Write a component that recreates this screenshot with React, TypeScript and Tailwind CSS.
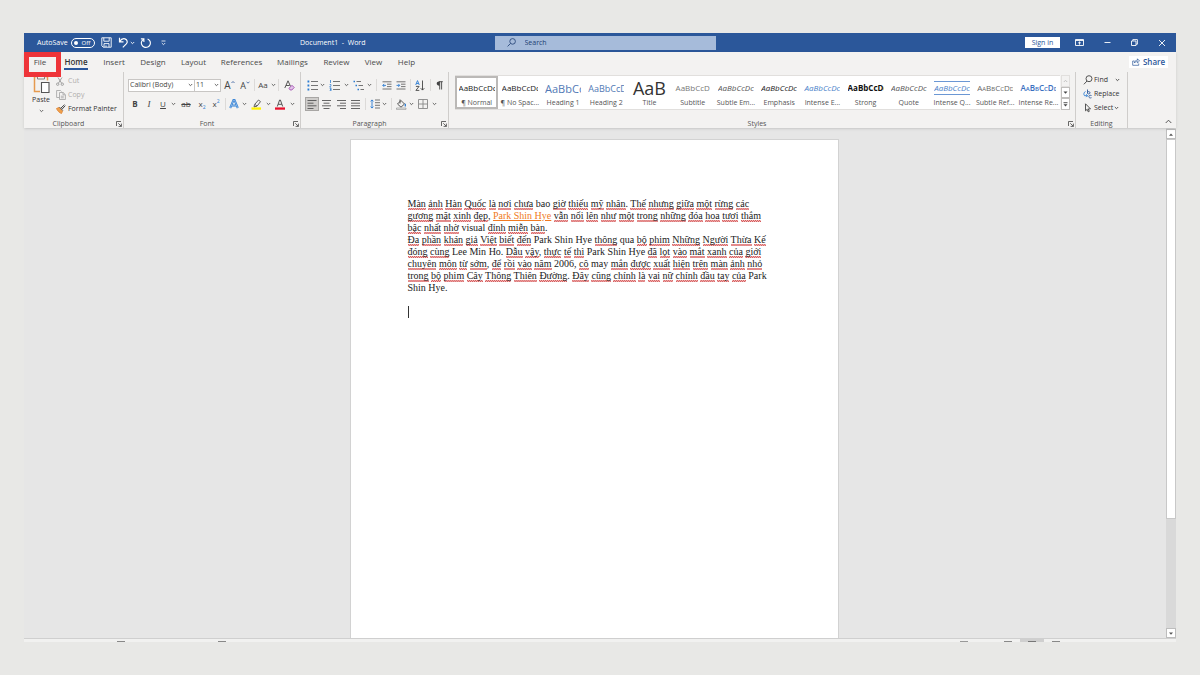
import type { ReactNode } from 'react';

const BLUE = '#2b579a';

function Icon({ w = 12, h = 12, children }: { w?: number; h?: number; children: ReactNode }) {
  return (
    <svg width={w} height={h} viewBox={`0 0 ${w} ${h}`} fill="none" stroke="#444" strokeWidth="0.9" aria-hidden="true" className="block shrink-0">
      {children}
    </svg>
  );
}

function Caret({ className = 'w-2' }: { className?: string }) {
  return (
    <button aria-label="More options" className={`flex h-3 shrink-0 items-center justify-center ${className}`}>
      <Icon w={5} h={4}><path d="M0.8 1l1.7 1.7L4.2 1" stroke="#555" /></Icon>
    </button>
  );
}

function Tool({ label, className = 'w-3.5', children }: { label: string; className?: string; children: ReactNode }) {
  return (
    <button aria-label={label} className={`flex h-3.5 shrink-0 items-center justify-center leading-none ${className}`}>
      {children}
    </button>
  );
}

function Rule({ className = 'w-1' }: { className?: string }) {
  return (
    <span className={`flex h-3 shrink-0 justify-center ${className}`}>
      <span className="w-px bg-[#dcdad8]" />
    </span>
  );
}

function Launcher({ label }: { label: string }) {
  return (
    <button aria-label={label} className="absolute right-px bottom-px">
      <Icon w={6} h={6}><path d="M0.5 5V0.5H5M2.3 2.3l3 3M5.4 2.6v2.8H2.6" strokeWidth="0.8" /></Icon>
    </button>
  );
}

function Group({ name, launcher = true, className, children }: { name: string; launcher?: boolean; className: string; children: ReactNode }) {
  return (
    <section aria-label={name} className={`relative flex flex-col border-r border-[#cfcdcb] ${className}`}>
      <div className="min-h-0 flex-1">{children}</div>
      <div className={`h-2 text-center leading-[8px] text-[#555] ${launcher ? 'pr-[10px]' : ''}`}>{name}</div>
      {launcher && <Launcher label={`${name} settings`} />}
    </section>
  );
}

function TitleBar() {
  return (
    <header className="flex h-[19px] items-center bg-[#2b579a] text-white">
      <div className="flex flex-1 items-center pl-[13px]">
        <label className="flex items-center gap-[3px] font-medium">
          AutoSave
          <span className="relative flex h-[10px] w-6 items-center rounded-full border border-white pl-0.5">
            <input type="checkbox" className="absolute inset-0 appearance-none" />
            <span className="size-1 rounded-full bg-white" />
            <span className="ml-1 text-[6px] leading-none">Off</span>
          </span>
        </label>
        <button aria-label="Save" className="ml-[6px]">
          <Icon w={11} h={11}><path d="M0.8 0.8h9.4v9.4H2.2L0.8 8.8zM2.8 0.8v3.4h5.4V0.8M3 10.2V6.600h5v3.600M5 10V8.400" stroke="#fff" /></Icon>
        </button>
        <button aria-label="Undo" className="ml-[6px]">
          <Icon w={11} h={11}><path d="M1.5 0.8v4h4M1.6 4.7C3 2.4 5 1.3 7 1.9c2.4.7 2.9 3.3 1.3 5L4.8 10.4" stroke="#fff" strokeWidth="1.2" /></Icon>
        </button>
        <span className="ml-px"><Icon w={5} h={4}><path d="M0.8 1l1.7 1.7L4.2 1" stroke="#fff" /></Icon></span>
        <button aria-label="Redo" className="ml-[5px]">
          <Icon w={12} h={12}><path d="M4 2.2C1.7 3.2.9 5.6 1.8 7.8c1 2.3 3.7 3.2 6 2.2s3.2-3.7 2.1-6C9.4 3 8.6 2.3 7.6 1.9M3.900 5V1.900H0.900" stroke="#fff" strokeWidth="1.1" /></Icon>
        </button>
        <button aria-label="Customize toolbar" className="ml-[9px]">
          <Icon w={5} h={6}><path d="M0.500 1h4M0.800 3l1.700 1.700L4.200 3" stroke="#fff" strokeWidth="0.800" /></Icon>
        </button>
        <h1 className="mr-[129px] ml-auto font-medium">Document1&nbsp; - &nbsp;Word</h1>
      </div>
      <label className="flex h-[14px] w-[221px] items-center bg-[#a6bbda] pl-3 text-[#1e3f73]">
        <Icon w={9} h={9}><circle cx="5.600" cy="3.400" r="2.800" stroke="#2b4a7c" /><path d="M3.500 5.500L0.600 8.400" stroke="#2b4a7c" /></Icon>
        <input aria-label="Search" placeholder="Search" className="ml-[9px] w-full bg-transparent font-medium outline-none placeholder:text-[#1e3f73]" />
      </label>
      <div className="flex flex-1 items-center justify-end pl-[3px]">
        <button className="h-[11px] w-[35px] bg-white leading-[11px] font-medium text-[#2b579a]">Sign in</button>
        <button aria-label="Ribbon display options" className="ml-[15px]">
          <Icon w={9} h={7}><path d="M0.500 0.500h8v6h-8zM0.500 1.500h8M4.500 5.700V3M3.200 4.100l1.300-1.200 1.300 1.200" stroke="#fff" /></Icon>
        </button>
        <button aria-label="Minimize" className="ml-[20px]"><Icon w={7} h={7}><path d="M0.500 3.500h6" stroke="#fff" /></Icon></button>
        <button aria-label="Restore" className="ml-[20px]"><Icon w={7} h={7}><path d="M0.500 2h4.500v4.500H0.500zM1.800 2V0.600h4.600v4.600H5" stroke="#fff" /></Icon></button>
        <button aria-label="Close" className="mr-[10px] ml-[20px]"><Icon w={8} h={8}><path d="M1 1l6 6M7 1L1 7" stroke="#fff" /></Icon></button>
      </div>
    </header>
  );
}

const tabs = [
  { name: 'File', cls: 'w-8' },
  { name: 'Home', cls: 'w-10' },
  { name: 'Insert', cls: 'w-9' },
  { name: 'Design', cls: 'w-[42px]' },
  { name: 'Layout', cls: 'w-[39px]' },
  { name: 'References', cls: 'w-[57px]' },
  { name: 'Mailings', cls: 'w-[45px]' },
  { name: 'Review', cls: 'w-[43px]' },
  { name: 'View', cls: 'w-[31px]' },
  { name: 'Help', cls: 'w-[35px]' },
];

function Tabs() {
  return (
    <nav className="relative flex h-5 items-center text-[8px] text-[#4a4a4a]">
      {tabs.map((t) => (
        <button key={t.name} className={`flex h-4 shrink-0 justify-center ${t.cls}`}>
          <span className={t.name === 'Home' ? 'h-4 border-b-2 border-[#2b579a] leading-[15px] font-semibold text-[#333]' : 'leading-[15px]'}>{t.name}</span>
        </button>
      ))}
      <span className="pointer-events-none absolute top-0 left-0 z-10 h-[25px] w-[37px] border-[5px] border-[#ee3439]" />
      <button className="mr-2 ml-auto flex h-3 w-[39px] items-center justify-center gap-[3px] bg-white font-semibold text-[#2b579a]">
        <Icon w={8} h={8}><path d="M2.500 3H0.700v4.300h6V5.500M2.300 5c.4-2 1.500-2.800 3.200-2.800V0.800L7.500 3 5.500 4.900V3.600C4 3.600 3 4 2.300 5z" stroke={BLUE} strokeWidth="0.700" /></Icon>
        Share
      </button>
    </nav>
  );
}

function Clipboard() {
  return (
    <Group name="Clipboard" className="w-[100px]">
      <div className="flex pl-[7px]">
        <button className="flex w-5 flex-col items-center">
          <Icon w={18} h={22}>
            <path d="M8 19.500H2.500V4.500H5M13 4.500h2.500v4" stroke="#e59a50" strokeWidth="1.500" />
            <path d="M5.500 4.500h7v2.500h-7z" fill="#f3f2f1" stroke="#777" />
            <path d="M9.500 10.500h7.500v10H9.500z" fill="#fff" stroke="#555" strokeWidth="1.100" />
          </Icon>
          <span className="mt-px leading-[10px] text-[#333]">Paste</span>
          <Caret />
        </button>
        <div className="flex flex-col pt-0.5 pl-[5px] leading-[14px]">
          <button className="flex h-[14px] items-center gap-[3px] text-[#b0aeac]">
            <Icon w={9} h={9}><path d="M2 0.500l3.600 5.700M6 0.500L2.400 6.200" stroke="#999" /><circle cx="1.700" cy="7.200" r="1.200" stroke="#999" /><circle cx="6.300" cy="7.200" r="1.200" stroke="#999" /></Icon>
            Cut
          </button>
          <button className="flex h-[14px] items-center gap-[2px] text-[#b0aeac]">
            <Icon w={10} h={10}><path d="M3.500 7.500H0.600v-7H4.500l1 1M3.500 2.500h3.700l2.200 2.200v4.800H3.500zM7 2.500v2.300h2.300M4.800 6.200h3M4.800 7.800h3" stroke="#aaa" strokeWidth="0.900" /></Icon>
            Copy
          </button>
          <button className="flex h-[14px] items-center gap-[2px] whitespace-nowrap text-[#333]">
            <Icon w={10} h={10}><path d="M0.500 4.500l2.500-1 3.500 3.500-1 2.500C3.500 8.800 1.500 7 0.500 4.500z" fill="#f0a04b" stroke="#e0883a" /><path d="M3.500 3.200L6.800 6.500M5 4L8.500 0.700M9.300 1.600L6.200 5" stroke="#444" strokeWidth="1" /></Icon>
            Format Painter
          </button>
        </div>
      </div>
    </Group>
  );
}

function FontGroup() {
  return (
    <Group name="Font" className="w-[177px]">
      <div className="flex items-center pt-[6px] pl-1 text-[#444]">
        <label className="flex h-[13px] w-[67px] items-center border border-[#c8c6c4] bg-white">
          <select aria-label="Font" className="w-full appearance-none pl-px outline-none"><option>Calibri (Body)</option></select>
          <Caret />
        </label>
        <label className="-ml-px flex h-[13px] w-[27px] items-center border border-[#c8c6c4] bg-white">
          <select aria-label="Font size" className="w-full appearance-none pl-px outline-none"><option>11</option></select>
          <Caret />
        </label>
        <Tool label="Grow font" className="w-[17px] text-[10px]">A<Icon w={4} h={8}><path d="M0.500 2l1.500-1.500L3.500 2" stroke={BLUE} strokeWidth="0.800" /></Icon></Tool>
        <Tool label="Shrink font" className="w-3.5 text-[9px]">A<Icon w={4} h={8}><path d="M0.500 0.700L2 2.200 3.500 0.700" stroke={BLUE} strokeWidth="0.800" /></Icon></Tool>
        <Rule className="w-1" />
        <Tool label="Change case" className="w-[14px] text-[8px]">Aa</Tool>
        <Caret className="w-[6px]" />
        <Rule className="w-[5px]" />
        <Tool label="Clear formatting" className="w-4">
          <Icon w={11} h={11}><path d="M0.800 8L4 0.800 6.600 6.500M2 5.500h3.600" /><path d="M5 8.300l3-3 2.200 2.200-2.400 2.500H6.200z" fill="#e3c4ea" stroke="#a04cb0" /></Icon>
        </Tool>
      </div>
      <div className="flex items-center pt-[5px] pl-1 text-[8px]">
        <Tool label="Bold"><b>B</b></Tool>
        <Tool label="Italic"><i className="font-['Liberation_Serif',serif] text-[9px]">I</i></Tool>
        <Tool label="Underline"><span className="underline">U</span></Tool>
        <Caret className="w-[7px]" />
        <Tool label="Strikethrough" className="w-[18px]"><span className="line-through">ab</span></Tool>
        <Tool label="Subscript">x<span className="mt-1.5 text-[5px] text-[#2b7cd3]">2</span></Tool>
        <Tool label="Superscript">x<span className="mb-1.5 text-[5px] text-[#2b7cd3]">2</span></Tool>
        <Rule />
        <Tool label="Text effects" className="w-[14px]">
          <Icon w={10} h={10}><path d="M1.200 9L4.500 1h1L8.800 9M2.500 6.400h5" stroke="#2b7cd3" strokeWidth="2" /><path d="M1.200 9L4.500 1h1L8.800 9M2.500 6.400h5" stroke="#fff" strokeWidth="0.400" /></Icon>
        </Tool>
        <Caret className="w-[6px]" />
        <Tool label="Highlight" className="w-[18px]">
          <Icon w={11} h={11}><path d="M0.500 8.400h9.500v2.300H0.500z" fill="#fff200" stroke="none" /><path d="M3 7.800l.6-2.300L7.500 1l2 1.600L6 7.200zM3.800 5.300L6 7" stroke="#555" /></Icon>
        </Tool>
        <Caret className="w-[6px]" />
        <Tool label="Font color" className="w-[18px]">
          <Icon w={10} h={11}><path d="M2.300 7.500L4.600 1h0.800L7.700 7.500M3.200 5.300h3.600" /><path d="M0 8.400h10v2.300H0z" fill="#e8112d" stroke="none" /></Icon>
        </Tool>
        <Caret className="w-[6px]" />
      </div>
    </Group>
  );
}

function ListIcon({ kind }: { kind: 'dots' | 'numbers' | 'tree' }) {
  return (
    <Icon w={11} h={11}>
      {kind === 'tree' ? (
        <>
          <path d="M3.500 1.500H8M5.500 5.500H10M7.500 9.500H11" stroke="#666" />
          <path d="M0.500 1.500h1.500M2.500 5.500h1.500M4.500 9.500h1.500" stroke="#2b7cd3" strokeWidth="1.300" />
        </>
      ) : (
        <>
          <path d="M4 1.500h7M4 5.500h7M4 9.500h7" stroke="#666" />
          {kind === 'dots' ? (
            <path d="M0.500 1.500h1.800M0.500 5.500h1.800M0.500 9.500h1.800" stroke="#2b7cd3" strokeWidth="1.800" />
          ) : (
            <path d="M1.500 0v3M0.700 4.500h1.200v1L0.700 7h1.500M0.700 8.300h1.400v2.400H0.700M1 9.500h1" stroke="#2b7cd3" strokeWidth="0.800" />
          )}
        </>
      )}
    </Icon>
  );
}

function Paragraph() {
  return (
    <Group name="Paragraph" className="w-[148px]">
      <div className="flex items-center pt-[6px] pl-1">
        <Tool label="Bullets"><ListIcon kind="dots" /></Tool>
        <Caret className="w-[7px]" />
        <Tool label="Numbering" className="w-[17px]"><ListIcon kind="numbers" /></Tool>
        <Caret className="w-[7px]" />
        <Tool label="Multilevel list" className="w-[16px]"><ListIcon kind="tree" /></Tool>
        <Caret className="w-[7px]" />
        <Rule className="w-[7px]" />
        <Tool label="Decrease indent">
          <Icon w={10} h={9}><path d="M0.500 0.800h9M5 3.200h4.500M5 5.600h4.500M0.500 8h9" stroke="#666" /><path d="M4 4.400H0.800M2.200 2.900L0.800 4.400l1.400 1.500" stroke="#2b7cd3" /></Icon>
        </Tool>
        <Tool label="Increase indent">
          <Icon w={10} h={9}><path d="M0.500 0.800h9M5 3.200h4.500M5 5.600h4.500M0.500 8h9" stroke="#666" /><path d="M0.500 4.400h3.200M2.300 2.900l1.400 1.500-1.400 1.500" stroke="#2b7cd3" /></Icon>
        </Tool>
        <Rule className="w-[4px]" />
        <Tool label="Sort" className="w-[16px]">
          <Icon w={10} h={11}><path d="M0.700 5L2.500 0.600 4.300 5M1.300 3.500h2.400" stroke="#2b7cd3" /><path d="M0.900 6.400h3.200L0.900 10.400h3.400M7.500 0.500v9.500M5.700 8.200l1.800 1.900 1.800-1.900" /></Icon>
        </Tool>
        <Rule className="w-[4px]" />
        <Tool label="Show marks">
          <Icon w={7} h={9}><path d="M3.700 8.500V0.700M5.600 8.500V0.700M2.800 0.700h4" /><path d="M3.700 0.500C1.700.300.700 1.300.700 2.600s1 2.200 3 2.100z" fill="#444" stroke="none" /></Icon>
        </Tool>
      </div>
      <div className="flex items-center pt-[5px] pl-1">
        <Tool label="Align left" className="w-3.5 border border-[#a8a6a4] bg-[#cfcdcb]"><Icon w={10} h={9}><path d="M0.500 0.500h9M0.500 3.200h6M0.500 5.800h9M0.500 8.500h6" stroke="#555" /></Icon></Tool>
        <Tool label="Align center" className="w-[15px]"><Icon w={9} h={9}><path d="M0 0.500h9M1.500 3.200h6M0 5.800h9M1.500 8.500h6" stroke="#555" /></Icon></Tool>
        <Tool label="Align right" className="w-[14px]"><Icon w={9} h={9}><path d="M0 0.500h9M3 3.200h6M0 5.800h9M3 8.500h6" stroke="#555" /></Icon></Tool>
        <Tool label="Justify" className="w-[15px]"><Icon w={9} h={9}><path d="M0 0.500h9M0 3.200h9M0 5.800h9M0 8.500h9" stroke="#555" /></Icon></Tool>
        <Rule className="w-[5px]" />
        <Tool label="Line spacing" className="w-[13px]">
          <Icon w={10} h={10}><path d="M5 1h5M5 3.700h5M5 6.300h5M5 9h5" stroke="#666" /><path d="M2 1v8M0.600 2.400L2 0.900l1.400 1.500M0.600 7.600L2 9.100l1.400-1.500" stroke="#2b7cd3" /></Icon>
        </Tool>
        <Caret className="w-[6px]" />
        <Rule className="w-[8px]" />
        <Tool label="Shading" className="w-[13px]">
          <Icon w={11} h={11}><path d="M1.500 5L5 1.500 8.500 5 5 8.200zM4 0.500v4" /><path d="M9.300 4.800v2.700" stroke="#2b7cd3" strokeWidth="1.300" /><path d="M0.500 9h9.500v1.400H0.500z" stroke="#888" strokeWidth="0.600" /></Icon>
        </Tool>
        <Caret className="w-[6px]" />
        <Tool label="Borders" className="w-[18px]"><Icon w={10} h={10}><path d="M0.500 0.500h9v9h-9zM5 0.500v9M0.500 5h9" stroke="#888" /></Icon></Tool>
        <Caret className="w-[5px]" />
      </div>
    </Group>
  );
}

const styleCards = [
  { name: '¶ Normal', text: 'AaBbCcDc', cls: 'text-[8px] leading-[12px] font-medium text-[#222]' },
  { name: '¶ No Spac...', text: 'AaBbCcDc', cls: 'text-[8px] leading-[12px] font-medium text-[#222]' },
  { name: 'Heading 1', text: 'AaBbCc', cls: 'text-[11px] leading-[15px] text-[#5179b5]' },
  { name: 'Heading 2', text: 'AaBbCcD', cls: 'text-[9px] leading-[13px] text-[#5179b5]' },
  { name: 'Title', text: 'AaB', cls: 'text-[18px] leading-[16px] text-[#333]' },
  { name: 'Subtitle', text: 'AaBbCcD', cls: 'text-[8px] leading-[12px] text-[#777]' },
  { name: 'Subtle Em...', text: 'AaBbCcDc', cls: 'text-[8px] leading-[12px] italic text-[#555]' },
  { name: 'Emphasis', text: 'AaBbCcDc', cls: 'text-[8px] leading-[12px] font-medium italic text-[#222]' },
  { name: 'Intense E...', text: 'AaBbCcDc', cls: 'text-[8px] leading-[12px] italic text-[#4a7fc9]' },
  { name: 'Strong', text: 'AaBbCcDc', cls: 'text-[8px] leading-[12px] font-bold text-[#111]' },
  { name: 'Quote', text: 'AaBbCcDc', cls: 'text-[8px] leading-[12px] italic text-[#555]' },
  { name: 'Intense Q...', text: 'AaBbCcDc', cls: 'border-y border-[#6b97d4] text-[8px] leading-[12px] italic text-[#4a7fc9]' },
  { name: 'Subtle Ref...', text: 'AaBbCcDd', cls: 'text-[8px] leading-[12px] [font-variant-caps:small-caps] text-[#666]' },
  { name: 'Intense Re...', text: 'AaBbCcDd', cls: 'text-[8px] leading-[12px] font-semibold [font-variant-caps:small-caps] text-[#3a6fc0]' },
];

function Styles() {
  return (
    <Group name="Styles" className="min-w-0 flex-1">
      <div className="flex h-[38px] pt-[3px] pr-[5px] pl-[6px]">
        <div className="flex min-w-0 flex-1 border-y border-[#e1dfdd] bg-white">
          {styleCards.map((s, i) => (
            <button key={s.name} className={`flex min-w-0 flex-1 flex-col items-center justify-between border-2 ${i === 0 ? 'border-[#bbb9b7]' : 'border-transparent'}`}>
              <span className="flex h-5 w-9 items-center overflow-hidden">
                <span className={`w-full overflow-hidden whitespace-nowrap ${s.cls}`}>{s.text}</span>
              </span>
              <span className="leading-[9px] whitespace-nowrap text-[#555]">{s.name}</span>
            </button>
          ))}
        </div>
        <div className="ml-px flex w-[9px] flex-col">
          <button aria-label="Scroll styles up" className="flex flex-1 items-center justify-center border border-[#e1dfdd]"><Icon w={5} h={4}><path d="M0.800 3l1.700-1.700L4.200 3" stroke="#bbb" /></Icon></button>
          <button aria-label="Scroll styles down" className="flex flex-1 items-center justify-center border border-[#c0bebc] bg-white"><Icon w={5} h={3}><path d="M0.500 0.500h4L2.500 2.700z" fill="#444" stroke="none" /></Icon></button>
          <button aria-label="More styles" className="flex flex-1 items-center justify-center border border-[#c0bebc] bg-white"><Icon w={5} h={5}><path d="M0.500 0.700h4" /><path d="M0.500 2.300h4L2.500 4.500z" fill="#444" stroke="none" /></Icon></button>
        </div>
      </div>
    </Group>
  );
}

function Editing() {
  return (
    <Group name="Editing" launcher={false} className="w-[52px]">
      <div className="flex flex-col pt-px pl-[7px] text-[#333]">
        <button className="flex h-[14px] items-center gap-px">
          <Icon w={10} h={10}><circle cx="6" cy="3.700" r="3" /><path d="M4 6L0.900 9.300" /></Icon>
          Find
          <span className="ml-[6px]"><Icon w={5} h={4}><path d="M0.800 1l1.700 1.700L4.200 1" /></Icon></span>
        </button>
        <button className="flex h-[14px] items-center gap-px">
          <Icon w={10} h={10}><path d="M4.500 0.500v4M4.500 3.200c.8-1 2.500-.7 2.500.600s-1.700 1.500-2.500.600M8.500 6.500c-2-.6-2.700.4-2.600 1.300s1.100 1.500 2.600.9" stroke={BLUE} /><path d="M2.500 2.500c-1.800.8-2 3-1 4.200h3M3.200 5.300l1.400 1.400-1.400 1.400" stroke="#2b7cd3" /></Icon>
          Replace
        </button>
        <button className="flex h-[14px] items-center gap-px">
          <Icon w={10} h={10}><path d="M2.500 0.800v7l1.700-1.500 1 2.500 1.100-.5-1-2.400h2.200z" /></Icon>
          Select
          <Icon w={5} h={4}><path d="M0.800 1l1.700 1.700L4.200 1" /></Icon>
        </button>
      </div>
    </Group>
  );
}

const lines = [
  'Màn ảnh Hàn Quốc là nơi chưa bao giờ thiếu mỹ nhân. Thế nhưng giữa một rừng các',
  'gương mặt xinh đẹp, @ vẫn nổi lên như một trong những đóa hoa tươi thắm',
  'bậc nhất nhờ visual đỉnh miễn bàn.',
  'Đa phần khán giả Việt biết đến Park Shin Hye thông qua bộ phim Những Người Thừa Kế',
  'đóng cùng Lee Min Ho. Dẫu vậy, thực tế thì Park Shin Hye đã lọt vào mắt xanh của giới',
  'chuyên môn từ sớm, để rồi vào năm 2006, cô may mắn được xuất hiện trên màn ảnh nhỏ',
  'trong bộ phim Cây Thông Thiên Đường. Đây cũng chính là vai nữ chính đầu tay của Park',
  'Shin Hye.',
];
const known = new Set(['bao', 'visual', 'Park', 'Shin', 'Hye', 'Hye.', 'qua', 'Lee', 'Min', 'Ho.', '2006,', 'may']);

function Word({ word }: { word: string }) {
  if (word === '@') return <a href="#park-shin-hye" className="text-[#f07a22] underline decoration-1 underline-offset-1">Park Shin Hye</a>;
  if (known.has(word)) return <>{word}</>;
  const stem = word.replace(/[.,]$/, '');
  return (
    <>
      <span className="bg-[conic-gradient(#d65a5a_25%,#f0bcbc_0_50%,#d65a5a_0_75%,#f0bcbc_0)] bg-[length:2px_2px] bg-bottom bg-repeat-x pb-px">{stem}</span>
      {word.slice(stem.length)}
    </>
  );
}

function DocumentPage() {
  return (
    <article className="mr-0.5 w-[489px] border-x border-t border-[#d2d2d2] bg-white px-[57px] pt-[58px] font-['Liberation_Serif',serif] text-[10px] leading-[12px] text-[#222]">
      {lines.map((line) => (
        <p key={line} className="whitespace-nowrap">
          {line.split(' ').map((word, i) => (
            <span key={i}>{i > 0 && ' '}<Word word={word} /></span>
          ))}
        </p>
      ))}
      <div className="mt-3 h-3 w-px bg-[#333]" />
    </article>
  );
}

function ScrollBar() {
  return (
    <div className="flex w-[10px] flex-col bg-[#d9d9d9] pt-px">
      <button aria-label="Scroll up" className="flex h-[10px] items-center justify-center border border-[#bdbdbd] bg-white"><Icon w={4} h={3}><path d="M0 2.700h4L2 0.500z" fill="#555" stroke="none" /></Icon></button>
      <div className="flex-[380] border border-[#c8c8c8] bg-white" />
      <div className="flex-[109]" />
      <button aria-label="Scroll down" className="flex h-[10px] items-center justify-center border border-[#bdbdbd] bg-white"><Icon w={4} h={3}><path d="M0 0.500h4L2 2.700z" fill="#555" stroke="none" /></Icon></button>
    </div>
  );
}

function StatusBar() {
  return (
    <footer className="flex h-1 items-end border-t border-[#cfcfcf] bg-[#f1f1f0]">
      <span className="ml-[93px] h-px w-2 bg-[#888]" />
      <span className="ml-[93px] h-px w-2 bg-[#888]" />
      <span className="ml-auto h-px w-2 bg-[#999]" />
      <span className="ml-9 h-px w-2 bg-[#888]" />
      <span className="ml-2 flex h-[3px] w-6 items-end justify-center bg-[#cfcfcf]"><span className="h-px w-2 bg-[#777]" /></span>
      <span className="mr-[116px] ml-2 h-px w-2 bg-[#888]" />
    </footer>
  );
}

export default function App() {
  return (
    <div className="flex h-screen flex-col bg-[#e8e8e6] px-6 py-[33px] font-['Open_Sans','Noto_Sans',sans-serif] text-[7px] leading-[10px] text-[#444]">
      <TitleBar />
      <div className="z-10 bg-[#f3f2f1] shadow-sm">
        <Tabs />
        <div className="flex h-14">
          <Clipboard />
          <FontGroup />
          <Paragraph />
          <Styles />
          <Editing />
          <div className="flex w-12 items-end justify-end p-1">
            <button aria-label="Collapse ribbon"><Icon w={7} h={5}><path d="M0.700 4l2.800-2.800L6.300 4" /></Icon></button>
          </div>
        </div>
      </div>
      <main className="flex min-h-0 flex-1 bg-[#e6e6e6]">
        <div className="flex min-w-0 flex-1 justify-center overflow-hidden pt-[11px]">
          <DocumentPage />
        </div>
        <ScrollBar />
      </main>
      <StatusBar />
    </div>
  );
}
